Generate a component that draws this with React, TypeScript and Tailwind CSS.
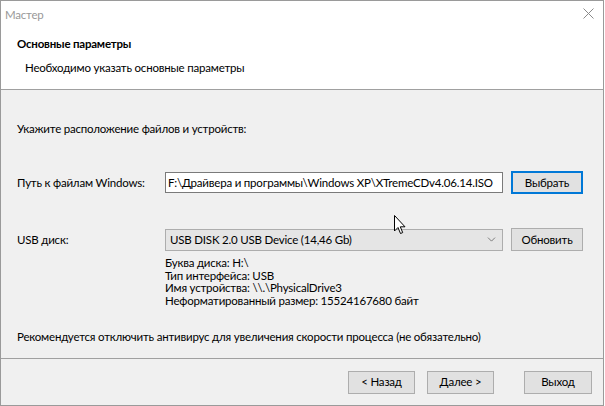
import { ChevronDown } from "lucide-react";

const info = [
  "Буква диска: H:\\",
  "Тип интерфейса: USB",
  "Имя устройства: \\\\.\\PhysicalDrive3",
  "Неформатированный размер: 15524167680 байт",
];

function Btn({ label, focused = false, className = "" }: { label: string; focused?: boolean; className?: string }) {
  return (
    <button
      type="button"
      className={`flex h-[23px] items-center justify-center bg-[#e1e1e1] text-black ${
        focused ? "border-2 border-[#0078d7]" : "border border-[#adadad]"
      } ${className}`}
    >
      {label}
    </button>
  );
}

export default function App() {
  return (
    <div className="relative h-[406px] w-[605px] overflow-hidden bg-white font-['Lato',sans-serif] text-[11.5px] leading-[16px] tracking-[-0.2px] text-black">
      <div className="flex h-full w-[604px] flex-col border-x border-y border-[#9a9a9a]">
        {/* title bar */}
        <div className="flex h-[27px] shrink-0 items-center justify-between bg-white pl-[4px] pr-[9px]">
          <span className="text-[#999999]">Мастер</span>
          <svg width="11" height="11" viewBox="0 0 11 11" className="mb-[2px]">
            <path d="M0.5 0.5 L10.5 10.5 M10.5 0.5 L0.5 10.5" stroke="#8a8a8a" strokeWidth="1" fill="none" />
          </svg>
        </div>

        {/* header */}
        <div className="box-border h-[62px] shrink-0 border-b border-[#a0a0a0] bg-white pl-[16px] pt-[8px]">
          <div className="font-bold">Основные параметры</div>
          <div className="mt-[8px] pl-[8px]">Необходимо указать основные параметры</div>
        </div>

        {/* body */}
        <div className="flex flex-1 flex-col bg-[#f0f0f0]">
          <div className="px-[16px] pt-[31px]">
            <div>Укажите расположение файлов и устройств:</div>

            <div className="mt-[34px] flex items-center">
              <div className="w-[148px]">Путь к файлам Windows:</div>
              <div className="flex h-[21px] w-[338px] items-center overflow-hidden whitespace-nowrap border border-[#7a7a7a] bg-white pl-[2px]">
                F:\Драйвера и программы\Windows XP\XTremeCDv4.06.14.ISO
              </div>
              <Btn label="Выбрать" focused className="ml-[8px] w-[72px]" />
            </div>

            <div className="mt-[34px] flex items-center">
              <div className="w-[148px]">USB диск:</div>
              <div className="flex h-[22px] w-[338px] items-center justify-between border border-[#adadad] bg-[#e5e5e5] pl-[4px] pr-[4px]">
                <span className="whitespace-nowrap">USB DISK 2.0 USB Device (14,46 Gb)</span>
                <ChevronDown size={13} strokeWidth={1.2} color="#444" />
              </div>
              <Btn label="Обновить" className="ml-[8px] w-[72px]" />
            </div>

            <div className="mt-[6px] pl-[148px] leading-[12.7px]">
              {info.map((line) => (
                <div key={line}>{line}</div>
              ))}
            </div>

            <div className="mt-[21px]">
              Рекомендуется отключить антивирус для увеличения скорости процесса (не обязательно)
            </div>
          </div>

          {/* footer */}
          <div className="mt-[13px] flex flex-1 items-start border-t border-[#a0a0a0] pt-[12px]">
            <div className="flex pl-[347px]">
              <Btn label="< Назад" className="w-[67px]" />
              <Btn label="Далее >" className="ml-[12px] w-[67px]" />
              <Btn label="Выход" className="ml-[30px] w-[68px]" />
            </div>
          </div>
        </div>
      </div>

      {/* mouse cursor */}
      <svg width="13" height="20" viewBox="0 0 13 20" className="absolute left-[394px] top-[215px]">
        <path d="M0.5 0.5 L0.5 16 L4 12.5 L6.5 18.5 L8.7 17.6 L6.3 11.8 L11 11.8 Z" fill="white" stroke="black" strokeWidth="1" strokeLinejoin="miter" />
      </svg>
    </div>
  );
}
